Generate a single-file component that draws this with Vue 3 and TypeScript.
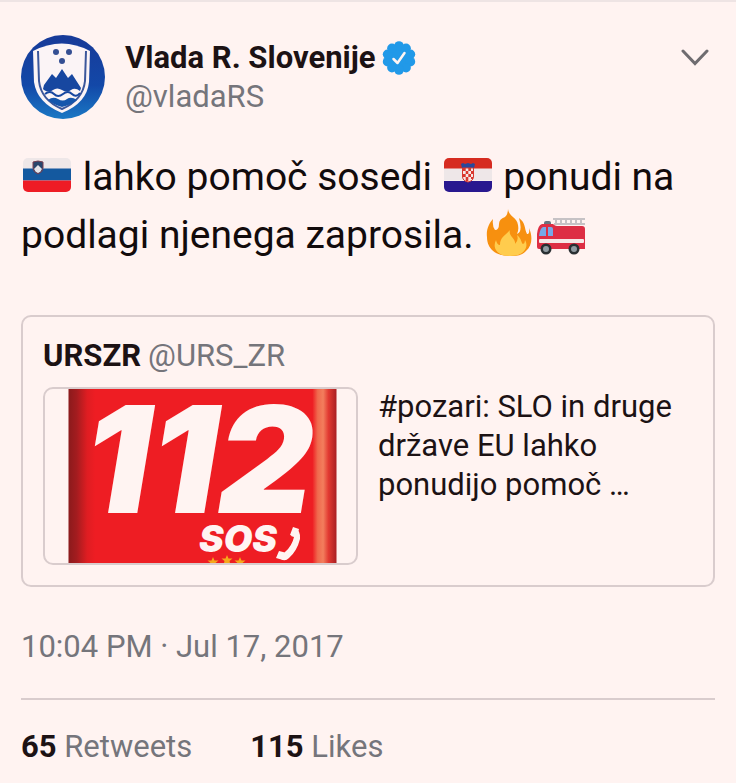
<script setup lang="ts">
interface Stat {
  count: number
  label: string
}

const author = { name: 'Vlada R. Slovenije', handle: '@vladaRS' }
const quoted = {
  name: 'URSZR',
  handle: '@URS_ZR',
  text: '#pozari: SLO in druge države EU lahko ponudijo pomoč …',
}
const stats: Stat[] = [
  { count: 65, label: 'Retweets' },
  { count: 115, label: 'Likes' },
]

// The lobes of the verified badge, spread round its centre.
const lobes = Array.from({ length: 10 }, (_, i) => {
  const a = ((i * 36 - 90) * Math.PI) / 180
  return { x: 17 + 12 * Math.cos(a), y: 17 + 12 * Math.sin(a) }
})
</script>

<template>
  <article class="tweet">
    <header class="head">
      <svg class="avatar" viewBox="0 0 84 84" role="img" aria-label="Vlada R. Slovenije">
        <defs>
          <linearGradient id="sea" x1="0" y1="0" x2="0" y2="1">
            <stop offset="0" stop-color="#173a98" />
            <stop offset="0.6" stop-color="#1348a8" />
            <stop offset="1" stop-color="#1a78c4" />
          </linearGradient>
        </defs>
        <circle cx="42" cy="42" r="42" fill="url(#sea)" />
        <path d="M12 16 Q41 1 69 16 L68 47 Q66 68 41 78 Q16 68 13 47Z" fill="#fbf4f6" />
        <path d="M17 16 L18 46 Q20 65 41 74 Q62 65 64 46 L65 16" fill="none" stroke="#3b579b" stroke-width="2" />
        <g fill="#344f93">
          <circle cx="35" cy="17" r="3" />
          <circle cx="48" cy="17" r="3" />
          <circle cx="41" cy="26" r="3" />
        </g>
        <path d="M22 54 L23 50 L31 39 L35 43 L41 34 L47 43 L51 39 L60 53 L59 56 Q54 52 50 55 T41 55 T32 55 T23 55Z" fill="#1747a0" />
        <path d="M24 59 Q29 55 33 59 T42 59 T51 59 T59 58" fill="none" stroke="#1747a0" stroke-width="2" />
        <path d="M27 65 Q32 61 37 64 T46 64 T56 65 Q50 70 41 72 Q33 70 27 65Z" fill="#1556ac" />
      </svg>
      <div class="who">
        <div class="name-row">
          <span class="name">{{ author.name }}</span>
          <svg class="badge" viewBox="0 0 34 34" role="img" aria-label="Verified">
            <circle cx="17" cy="17" r="13" fill="#2199e8" />
            <circle v-for="(p, i) in lobes" :key="i" :cx="p.x" :cy="p.y" r="4.8" fill="#2199e8" />
            <path d="M11.5 18 L15.5 22 L22.5 12" fill="none" stroke="#fff4f2" stroke-width="2.5" stroke-linecap="round" stroke-linejoin="round" />
          </svg>
        </div>
        <a class="handle" href="#">{{ author.handle }}</a>
      </div>
      <button class="more" type="button" aria-label="More options">
        <svg viewBox="0 0 28 18">
          <path d="M2 3 L14 15.5 L26 3" fill="none" stroke="#6f6c70" stroke-width="3" stroke-linecap="round" />
        </svg>
      </button>
    </header>

    <p class="body">
      <svg class="emoji" viewBox="0 0 52 50" role="img" aria-label="Slovenia">
        <defs>
          <clipPath id="flag"><rect x="2" y="8" width="48" height="34" rx="5" /></clipPath>
        </defs>
        <g clip-path="url(#flag)">
          <path fill="#eee7e8" d="M0 8h52v11H0z" />
          <path fill="#14599f" d="M0 18.500h52v12H0z" />
          <path fill="#ee1c25" d="M0 30.500h52v12H0z" />
        </g>
        <path d="M12 12 Q17 10 22 12 V18 Q22 22 17 24 Q12 22 12 18Z" fill="#29466c" />
        <path d="M13 19 L17 15 L21 19 Q20 22 17 23 Q14 22 13 19Z" fill="#e6e4e9" />
        <path d="M12 12 Q17 10 22 12 V18 Q22 22 17 24 Q12 22 12 18Z" fill="none" stroke="#7a4052" />
      </svg>
      lahko pomoč sosedi
      <svg class="emoji" viewBox="0 0 52 50" role="img" aria-label="Croatia">
        <g clip-path="url(#flag)">
          <path fill="#d62b20" d="M0 8h52v11H0z" />
          <path fill="#eee7e8" d="M0 18.500h52v12H0z" />
          <path fill="#29188f" d="M0 31h52v12H0z" />
        </g>
        <path d="M19 14 L21 13 L23 14 L26 13 L29 14 L31 13 L33 14 L32 18 H20Z" fill="#29489b" />
        <path d="M20.500 18 H31.500 V27 Q31 31 26 32 Q21 31 20.500 27Z" fill="#f6e7e6" stroke="#d9382e" />
        <path fill="#d9382e" d="M21 18h2.700v3H21zM26.300 18H29v3h-2.700zM23.700 21h2.600v3h-2.600zM29 21h2.500v3H29zM21 24h2.700v3H21zM26.300 24H29v3h-2.700zM23.700 27h2.600v4h-2.600zM29 27h2v2h-2z" />
      </svg>
      ponudi na podlagi njenega zaprosila.
      <span class="pair">
        <svg class="emoji" viewBox="0 0 52 50" role="img" aria-label="Fire">
          <path d="M25 1 C26 9 34 9 35 17 Q36 22 34 26 Q40 24 36 10 C43 15 41 20 44 26 Q47 26 46 20 C50 29 49 38 43 43 C38 48 33 48 27 48 C13 48 4 41 4 29 C3 22 6 15 10 11 Q9 18 12 22 Q16 22 16 16 Q16 11 22 9 Q25 6 25 1Z" fill="#f7900f" />
          <path d="M27 22 C25 28 33 30 32 36 Q36 32 34 27 C39 31 38 35 40 36 Q42 35 42 32 C46 39 41 45 35 47 Q27 49 19 47 C12 44 10 38 13 32 Q14 37 17 37 C17 29 22 28 27 22Z" fill="#ffcc4d" />
        </svg><svg class="emoji" viewBox="0 0 52 50" role="img" aria-label="Fire engine">
          <path d="M18 11H50 M19 16H50" stroke="#c6c2c5" stroke-width="2" />
          <path d="M21 11v5M26 11v5M31 11v5M36 11v5M41 11v5M46 11v5" stroke="#c6c2c5" stroke-width="2" />
          <rect x="9" y="13" width="7" height="5" rx="2" fill="#66757f" />
          <path d="M7 16H18Q20 18 22 18H47Q50 18 50 21V41H4Q2 41 2 39V26Q3 17 7 16Z" fill="#dd2e44" />
          <path d="M8 19H11V28H4Q5 20 8 19ZM13 19H16Q18 19 18 21V28H13Z" fill="#75a9e8" />
          <rect x="4" y="31" width="45" height="4" rx="1" fill="#f6e9e8" />
          <g fill="#292f33"><circle cx="11" cy="41" r="5.500" /><circle cx="39" cy="41" r="5.500" /></g>
          <g fill="#8f9aa1"><circle cx="11" cy="41" r="3" /><circle cx="39" cy="41" r="3" /></g>
        </svg>
      </span>
    </p>

    <section class="quote">
      <div class="quote-head">
        <span class="quote-name">{{ quoted.name }}</span>
        <a class="handle" href="#">{{ quoted.handle }}</a>
      </div>
      <div class="quote-main">
        <svg class="thumb" viewBox="0 0 311 174" role="img" aria-label="112 SOS">
          <defs>
            <linearGradient id="box">
              <stop offset="0" stop-color="#8b1a1c" />
              <stop offset="0.03" stop-color="#a31c1f" />
              <stop offset="0.07" stop-color="#df1d22" />
              <stop offset="0.1" stop-color="#ee1d23" />
              <stop offset="0.91" stop-color="#ee1d23" />
              <stop offset="0.93" stop-color="#f06a4e" />
              <stop offset="0.95" stop-color="#f37e5d" />
              <stop offset="0.97" stop-color="#e23a32" />
              <stop offset="1" stop-color="#a91f23" />
            </linearGradient>
          </defs>
          <rect x="23.500" width="268" height="174" fill="url(#box)" />
          <text class="logo-digits" x="39" y="124">112</text>
          <text class="logo-sos" x="154" y="163">SOS</text>
          <path d="M250 139 Q256 142 255 150 Q252 162 244 169 Q240 173 236 170 L240 163 Q247 157 249 148 L246 147Z" fill="#fff4f2" />
          <path d="M248 138 L254 140 L252 148 L245 146ZM234 162 L242 164 L238 171 L231 169Z" fill="#fff4f2" />
          <g fill="#f5a81c">
            <path v-for="(p, i) in [[168, 168], [182, 166], [195, 168]]" :key="i" d="M0 0l1.500 3.500h4l-3 2.500 1 4-3.500-2-3.500 2 1-4-3-2.500h4z" :transform="`translate(${p[0]} ${p[1]})`" />
          </g>
        </svg>
        <p class="quote-text">{{ quoted.text }}</p>
      </div>
    </section>

    <time class="time" datetime="2017-07-17T22:04">10:04 PM · Jul 17, 2017</time>

    <footer class="stats">
      <a v-for="s in stats" :key="s.label" class="stat" href="#">
        <strong>{{ s.count }}</strong> {{ s.label }}
      </a>
    </footer>
  </article>
</template>

<style>
body {
  margin: 0;
  background: #fff3f1;
}
</style>

<style scoped>
.tweet {
  box-sizing: border-box;
  padding: 33px 21px 16px;
  border-top: 2px solid #eee4e4;
  font-family: Roboto, "Liberation Sans", sans-serif;
  font-size: 31px;
  line-height: 39px;
  color: #1c1214;
}
a {
  color: #75757b;
  text-decoration: none;
}
.head {
  display: flex;
  align-items: flex-start;
}
.avatar {
  flex: none;
  width: 84px;
  height: 84px;
  margin-right: 20px;
}
.who {
  flex: 1;
  min-width: 0;
  padding-top: 3px;
}
.name-row {
  display: flex;
  align-items: center;
  gap: 6px;
}
.name,
.quote-name,
.stat strong {
  font-weight: 700;
  color: #1c1214;
}
.badge {
  width: 34px;
  height: 34px;
}
.more {
  display: flex;
  margin: 7px 0 0;
  padding: 6px;
  border: 0;
  background: none;
}
.more svg {
  width: 28px;
  height: 18px;
}
.body {
  margin: 29px 0 0;
  font-size: 39px;
  line-height: 58px;
  color: #120b0c;
}
.emoji {
  width: 52px;
  height: 50px;
  vertical-align: -10px;
}
.pair {
  white-space: nowrap;
}
.quote {
  margin-top: 51px;
  padding: 19px 20px 20px;
  border: 2px solid #d9cccd;
  border-radius: 10px;
}
.quote-head {
  display: flex;
  gap: 7px;
}
.quote-main {
  display: grid;
  grid-template-columns: 315px 1fr;
  gap: 20px;
  align-items: start;
  margin-top: 12px;
}
.thumb {
  display: block;
  box-sizing: border-box;
  width: 100%;
  border: 2px solid #d9cccd;
  border-radius: 10px;
}
.logo-digits {
  font: italic 900 148px Inter, sans-serif;
  fill: #fff4f2;
}
.logo-sos {
  font: italic 900 37px Inter, sans-serif;
  fill: #fff4f2;
}
.quote-text {
  margin: 0;
}
.time {
  display: block;
  margin-top: 40px;
  padding-bottom: 32px;
  border-bottom: 2px solid #d9cccd;
  color: #75757b;
}
.stats {
  display: flex;
  gap: 58px;
  padding-top: 27px;
}
</style>
